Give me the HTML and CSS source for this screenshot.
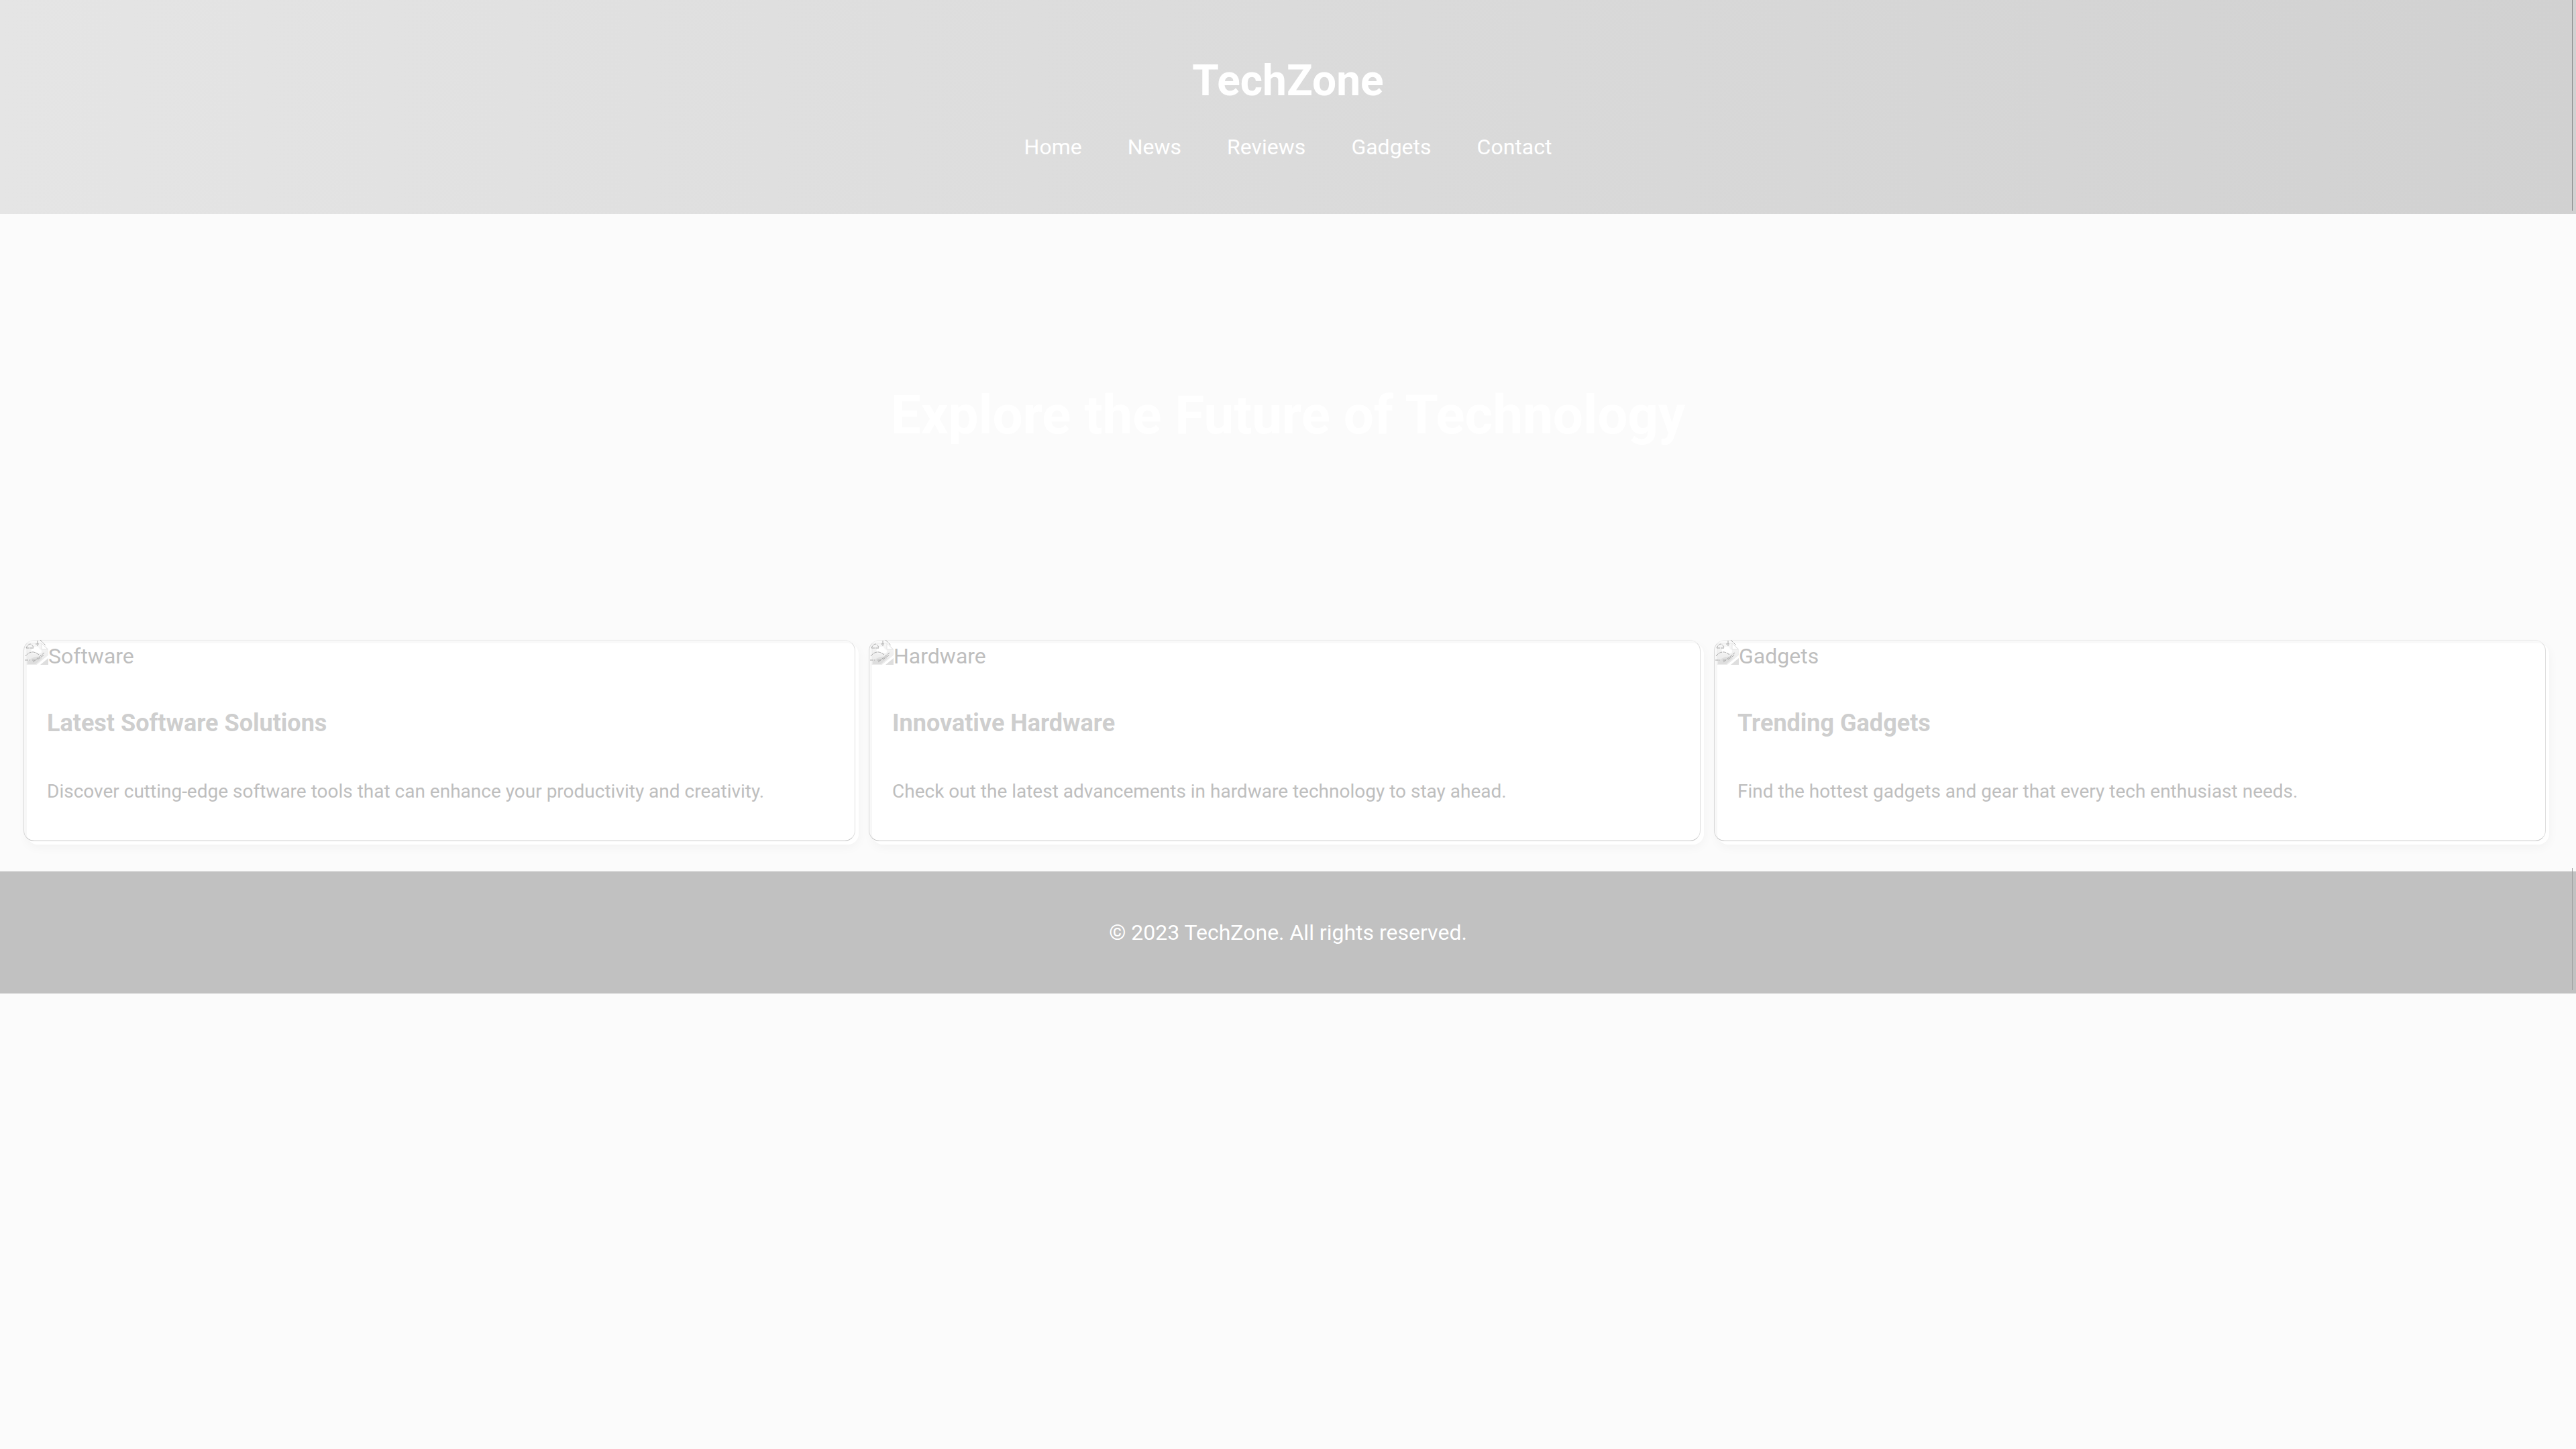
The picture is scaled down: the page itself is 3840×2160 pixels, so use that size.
FILE: index.html
```html
<!DOCTYPE html>
<html lang="en">
<head>
<meta charset="utf-8">
<meta name="viewport" content="width=device-width, initial-scale=1">
<title>TechZone</title>
<link rel="stylesheet" href="styles.css">
</head>
<body>
<svg class="sprite" aria-hidden="true">
  <defs>
    <linearGradient id="sky" x1="0" y1="0" x2="0" y2="1">
      <stop offset="0" stop-color="#f7f7f7"/>
      <stop offset="1" stop-color="#e9e9e9"/>
    </linearGradient>
  </defs>
  <symbol id="broken" viewBox="-5 -5 37 37">
    <path fill="url(#sky)" stroke="#ececec" d="M0 0H22L32 9V17L14 32H0Z"/>
    <path fill="#fff" d="M7 13a4 4 0 0 1 3-6 5 5 0 0 1 9 2 3 3 0 0 1 0 6H9Z"/>
    <path fill="#dedede" d="M1 27Q7 21 14 20Q19 19 23 22L13 31H1Z"/>
    <path fill="#dedede" d="M20 32L32 22V32Z"/>
    <path fill="#fff" stroke="#e4e4e4" d="M22 0V9H31Z"/>
    <path fill="none" stroke="#a8a8a8" d="M-1 7H10Q9 2 5 1Q1 2 -1 7M-3 25H4M8 25H13M-2 19Q7 8 18 17M9 28L26 14M16 24L26 17M16 -4V4M13 1H19M20 -5L28 3" stroke-dasharray="5 1"/>
  </symbol>
</svg>
<header class="site-header">
  <h1 class="brand">TechZone</h1>
  <nav class="nav">
    <a href="#">Home</a>
    <a href="#">News</a>
    <a href="#">Reviews</a>
    <a href="#">Gadgets</a>
    <a href="#">Contact</a>
  </nav>
</header>
<main>
  <section class="hero"><h2 class="hero-title">Explore the Future of Technology</h2></section>
  <section class="cards">
    <article class="card">
      <div class="media"><svg class="icon" aria-hidden="true"><use href="#broken"/></svg><span>Software</span></div>
      <h3 class="card-title">Latest Software Solutions</h3>
      <p class="card-text">Discover cutting-edge software tools that can enhance your productivity and creativity.</p>
    </article>
    <article class="card">
      <div class="media"><svg class="icon" aria-hidden="true"><use href="#broken"/></svg><span>Hardware</span></div>
      <h3 class="card-title">Innovative Hardware</h3>
      <p class="card-text">Check out the latest advancements in hardware technology to stay ahead.</p>
    </article>
    <article class="card">
      <div class="media"><svg class="icon" aria-hidden="true"><use href="#broken"/></svg><span>Gadgets</span></div>
      <h3 class="card-title">Trending Gadgets</h3>
      <p class="card-text">Find the hottest gadgets and gear that every tech enthusiast needs.</p>
    </article>
  </section>
</main>
<footer class="site-footer"><p>© 2023 TechZone. All rights reserved.</p></footer>
</body>
</html>
```
FILE: styles.css
```css
* { box-sizing: border-box; }

body {
  margin: 0;
  background: #fbfbfb;
  color: #bebebe;
  font: 32px/38px Roboto, sans-serif;
}

h1, h2, h3, p { margin: 0; }

.sprite { position: absolute; width: 0; height: 0; }

.site-header {
  position: relative;
  padding: 81px 40px 80px;
  background: linear-gradient(90deg, #e5e5e5, #d1d1d1);
  color: #fff;
  text-align: center;
}

/* hairline down the right side of the full-width bars */
.site-header::after,
.site-footer::after {
  content: "";
  position: absolute;
  top: -5px;
  right: 5px;
  bottom: 5px;
  width: 1px;
  background: #888;
}

.site-footer::after { background: #a0a0a0; }

.brand { font-size: 64px; line-height: 80px; }

.nav {
  display: flex;
  justify-content: center;
  gap: 68px;
  padding: 39px 0 1px;
}

.nav a { color: #fff; text-decoration: none; }

.hero {
  padding: 253px 40px;
  color: #fff;
  text-align: center;
}

.hero-title { font-size: 80px; line-height: 94px; }

.cards {
  display: grid;
  grid-template-columns: repeat(3, 1fr);
  gap: 20px;
  padding: 40px;
}

.card {
  position: relative;
  padding-bottom: 62px;
  border-radius: 16px;
  background: #fff;
  box-shadow: 0 4px 16px rgba(0, 0, 0, 0.04);
}

/* thin frame set up and to the left of the card */
.card::before {
  content: "";
  position: absolute;
  inset: -5px 5px 5px -5px;
  border: 1px solid;
  border-color: #ececec #dedede #c6c6c6 #d8d8d8;
  border-radius: 16px;
}

.media { display: flex; height: 38px; }

.icon {
  position: relative;
  width: 37px;
  height: 37px;
  margin: -5px 0 0 -5px;
}

.card-title {
  padding: 59px 30px 0;
  color: #cecece;
  font-size: 36px;
  line-height: 44px;
}

.card-text {
  padding: 63px 30px 0;
  font-size: 28px;
  line-height: 34px;
}

.site-footer {
  position: relative;
  padding: 72px 40px;
  background: #c1c1c1;
  color: #fff;
  text-align: center;
}
```
